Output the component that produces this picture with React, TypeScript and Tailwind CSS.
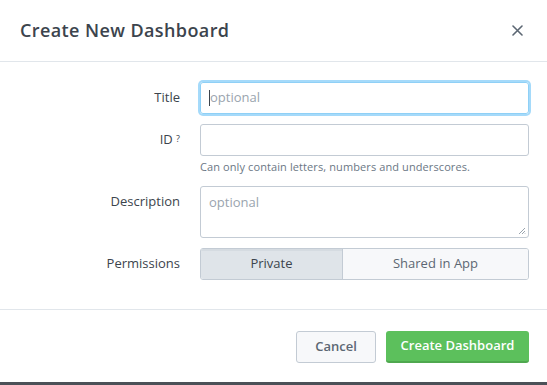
import React from "react";

export default function App() {
  const font = { fontFamily: '"Open Sans", "Liberation Sans", sans-serif' };
  return (
    <div className="w-[547px] h-[385px] bg-white flex flex-col text-[#3c444d]" style={font}>
      <div className="h-[62px] shrink-0 border-b border-[#e1e6eb] flex items-center justify-between pl-[20px] pr-[24px]">
        <h1 className="text-[18px] font-semibold leading-none tracking-[0.4px] text-[#3c444d] -mt-[2px]">Create New Dashboard</h1>
        <svg width="11" height="11" viewBox="0 0 11 11" className="-mt-[1px]">
          <path d="M1 1 L10 10 M10 1 L1 10" stroke="#5c6773" strokeWidth="1.6" strokeLinecap="round" />
        </svg>
      </div>
      <div className="flex-1 flex flex-col pt-[20px] pr-[18px] text-[13px]">
        <div className="flex">
          <label className="w-[200px] shrink-0 pr-[20px] text-right pt-[7px] leading-[16px]">Title</label>
          <div className="flex-1 h-[32px] rounded-[3px] border border-[#8fd0f6] shadow-[0_0_0_2px_#a5dafa] flex items-center px-[8px] text-[#9aa4ae]">
            <span className="w-px h-[16px] bg-[#3c444d]" />
            <span>optional</span>
          </div>
        </div>
        <div className="flex mt-[10px]">
          <label className="w-[200px] shrink-0 pr-[20px] text-right pt-[7px] leading-[16px]">
            ID <sup className="text-[9px] relative -top-[2px]">?</sup>
          </label>
          <div className="flex-1 flex flex-col">
            <div className="h-[32px] rounded-[3px] border border-[#c3cbd4] bg-white" />
            <div className="text-[11px] text-[#6b7785] mt-[3px] leading-[15px] tracking-[0.1px]">
              Can only contain letters, numbers and underscores.
            </div>
          </div>
        </div>
        <div className="flex mt-[12px]">
          <label className="w-[200px] shrink-0 pr-[20px] text-right pt-[7px] leading-[16px]">Description</label>
          <div className="flex-1 h-[52px] rounded-[3px] border border-[#c3cbd4] relative px-[8px] pt-[7px] leading-[16px] text-[#9aa4ae]">
            optional
            <svg width="8" height="8" viewBox="0 0 8 8" className="absolute right-[2px] bottom-[2px]">
              <path d="M7 1 L1 7 M7 4 L4 7 M7 6.5 L6.5 7" stroke="#9aa4ae" strokeWidth="1" />
            </svg>
          </div>
        </div>
        <div className="flex mt-[10px]">
          <label className="w-[200px] shrink-0 pr-[20px] text-right pt-[7px] leading-[16px]">Permissions</label>
          <div className="flex-1 h-[32px] flex rounded-[3px] border border-[#c3cbd4] overflow-hidden">
            <div className="w-[142px] bg-[#dfe4e9] border-r border-[#c3cbd4] flex items-center justify-center text-[#3c444d] shadow-[inset_0_2px_0_#d5dbe1]">
              Private
            </div>
            <div className="flex-1 bg-[#f7f8fa] flex items-center justify-center text-[#5c6773]">Shared in App</div>
          </div>
        </div>
      </div>
      <div className="h-[73px] shrink-0 border-t border-[#e1e6eb] flex items-start justify-end gap-[10px] pt-[21px] pr-[18px] text-[13px]">
        <button className="w-[80px] h-[32px] rounded-[3px] border border-[#c3cbd4] bg-[#f7f8fa] text-[#5c6773] font-semibold">
          Cancel
        </button>
        <button className="w-[143px] h-[32px] rounded-[3px] bg-[#5cc05c] border-b-2 border-[#4fa84f] text-white font-semibold">
          Create Dashboard
        </button>
      </div>
      <div className="h-[3px] shrink-0 bg-[#4b5057]" />
    </div>
  );
}
